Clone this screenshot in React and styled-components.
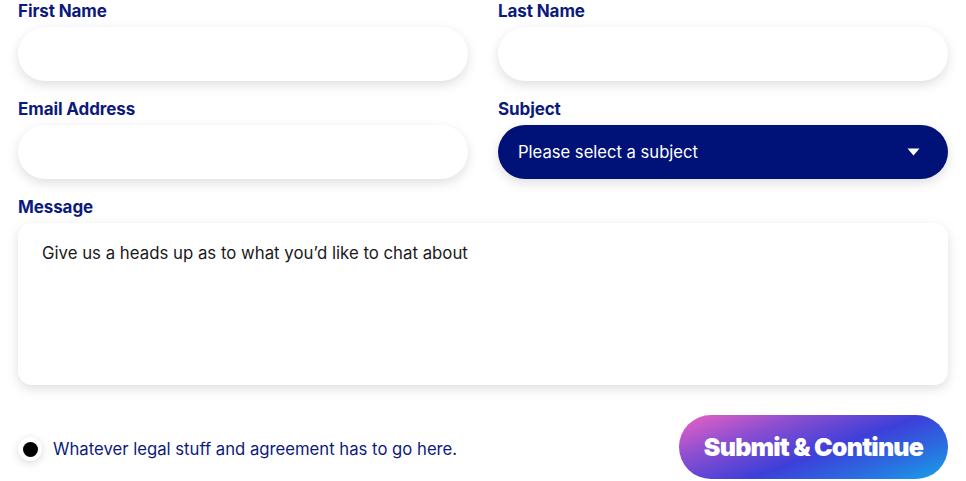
import React from "react";
import styled, { createGlobalStyle } from "styled-components";

const Global = createGlobalStyle`
  html, body { margin: 0; padding: 0; background: #fff; }
  body { font-family: "Inter", "Noto Sans", sans-serif; }
  * { box-sizing: border-box; }
`;

const Form = styled.form`
  width: 966px;
  padding: 0 18px;
  display: flex;
  flex-direction: column;
`;

const Grid = styled.div`
  display: grid;
  grid-template-columns: 450px 450px;
  column-gap: 30px;
  row-gap: 17px;
`;

const Field = styled.div`
  display: flex;
  flex-direction: column;
  gap: 4px;
  grid-column: ${(p) => (p.$full ? "1 / -1" : "auto")};
`;

const Label = styled.label`
  font-size: 17px;
  line-height: 23px;
  font-weight: 700;
  color: #0c1a7c;
  letter-spacing: -0.1px;
`;

const Input = styled.input`
  height: 54px;
  border: none;
  border-radius: 27px;
  background: #fff;
  box-shadow: 0 4px 12px rgba(0, 0, 0, 0.13);
  padding: 0 20px;
  font: inherit;
  outline: none;
`;

const Select = styled.div`
  height: 54px;
  border-radius: 27px;
  background: #001277;
  color: #fff;
  display: flex;
  align-items: center;
  justify-content: space-between;
  padding: 0 28px 0 20px;
  font-size: 16.6px;
  box-shadow: 0 4px 12px rgba(0, 0, 0, 0.13);
`;

const TextArea = styled.div`
  height: 162px;
  border-radius: 14px;
  background: #fff;
  box-shadow: 0 4px 12px rgba(0, 0, 0, 0.13);
  padding: 20px 24px;
  font-size: 16.8px;
  line-height: 20px;
  color: #1a1a1a;
`;

const Footer = styled.div`
  display: flex;
  align-items: center;
  justify-content: space-between;
  margin-top: 30px;
`;

const Agree = styled.div`
  display: flex;
  align-items: center;
  gap: 11px;
  color: #0c1a7c;
  font-size: 16.7px;
  padding-top: 4px;
`;

const Radio = styled.span`
  width: 24px;
  height: 24px;
  border-radius: 50%;
  background: #fff;
  box-shadow: 0 2px 8px rgba(0, 0, 0, 0.15);
  display: flex;
  align-items: center;
  justify-content: center;
  &::after {
    content: "";
    width: 15px;
    height: 15px;
    border-radius: 50%;
    background: #000;
  }
`;

const Button = styled.button`
  width: 269px;
  height: 64px;
  border: none;
  border-radius: 32px;
  background: linear-gradient(160deg, #ee62c4 0%, #8a4ed0 28%, #3d3fd9 55%, #2a6ee0 78%, #16a3e8 100%);
  color: #fff;
  font-family: "Inter", sans-serif;
  font-weight: 900;
  font-size: 25px;
  letter-spacing: -0.8px;
  cursor: pointer;
`;

export default function App() {
  return (
    <>
      <Global />
      <Form>
        <Grid>
          <Field>
            <Label>First Name</Label>
            <Input />
          </Field>
          <Field>
            <Label>Last Name</Label>
            <Input />
          </Field>
          <Field>
            <Label>Email Address</Label>
            <Input />
          </Field>
          <Field>
            <Label>Subject</Label>
            <Select>
              <span>Please select a subject</span>
              <svg width="13" height="8" viewBox="0 0 13 8">
                <path d="M0.5 0.5 H12.5 L6.5 7.5 Z" fill="#fff" />
              </svg>
            </Select>
          </Field>
          <Field $full>
            <Label>Message</Label>
            <TextArea>Give us a heads up as to what you’d like to chat about</TextArea>
          </Field>
        </Grid>
        <Footer>
          <Agree>
            <Radio />
            <span>Whatever legal stuff and agreement has to go here.</span>
          </Agree>
          <Button type="button">Submit &amp; Continue</Button>
        </Footer>
      </Form>
    </>
  );
}
